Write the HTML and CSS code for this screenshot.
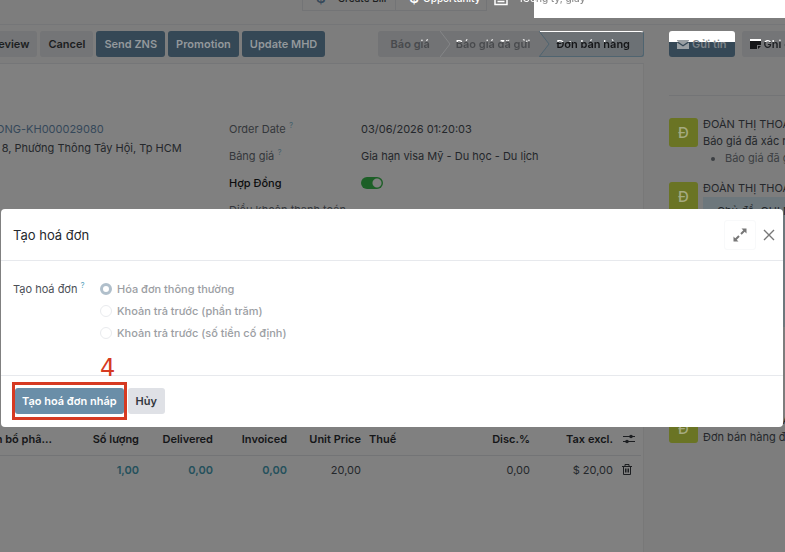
FILE: index.html
```html
<!DOCTYPE html>
<html lang="vi">
<head>
    <meta charset="UTF-8">
    <meta name="viewport" content="width=device-width, initial-scale=1.0">
    <title>Tạo hoá đơn</title>
    <link rel="stylesheet" href="styles.css">
</head>
<body>
    <div class="blank"></div>
    <div class="stat-bar">
        <button class="stat-button"><span class="stat-icon">$</span>Create Bill</button>
        <button class="stat-button bright"><span class="stat-icon">$</span>Opportunity</button>
        <button class="stat-button bright">
            <svg width="14" height="16" viewBox="0 0 14 16"><path d="M1 1h12v13.500H1zM3.500 8.500h7M3.500 11.500h7" fill="none" stroke="#fff" stroke-width="1.500"/></svg>
            <span class="faded">1Công ty, giấy</span>
        </button>
    </div>

    <div class="page">
        <main class="form">
            <div class="status-bar">
                <button class="btn btn-light first">Preview</button>
                <button class="btn btn-light">Cancel</button>
                <button class="btn btn-primary">Send ZNS</button>
                <button class="btn btn-primary">Promotion</button>
                <button class="btn btn-primary">Update MHD</button>
                <div class="steps">
                    <button class="step">Báo g<span class="lit">iá</span></button>
                    <svg class="arrow" width="11" height="26" viewBox="0 0 11 26"><path d="M0 0l10 13L0 26" fill="none" stroke="#858688"/></svg>
                    <button class="step"><span class="lit">Báo giá đã gửi</span></button>
                    <button class="step step-active">
                        <svg width="11" height="26" viewBox="0 0 11 26"><path d="M0 0l10 13L0 26z" fill="#727375"/><path d="M0 0l10 13L0 26" fill="none" stroke="#4f6470"/></svg>
                        <span class="lit">Đơn bán hàng</span>
                    </button>
                </div>
            </div>

            <div class="sheet">
                <div class="groups">
                    <div class="customer">
                        <a class="customer-name" href="#">DUONG-KH000029080</a>
                        <span>Số 8, Phường Thông Tây Hội, Tp HCM</span>
                    </div>
                    <dl class="fields">
                        <dt>Order Date <sup>?</sup></dt>
                        <dd>03/06/2026 01:20:03</dd>
                        <dt>Bảng giá <sup>?</sup></dt>
                        <dd>Gia hạn visa Mỹ - Du học - Du lịch</dd>
                        <dt><label class="strong" for="contract">Hợp Đồng</label></dt>
                        <dd><input class="switch" type="checkbox" id="contract" checked></dd>
                        <dt>Điều khoản thanh toán</dt>
                        <dd></dd>
                    </dl>
                </div>

                <table class="lines">
                    <colgroup>
                        <col class="col-first"><col class="col-num"><col class="col-num"><col class="col-num"><col class="col-num"><col><col class="col-num"><col class="col-total"><col class="col-icon">
                    </colgroup>
                    <thead>
                        <tr>
                            <th><span class="cut">Phân bổ phâ...</span></th>
                            <th>Số lượng</th>
                            <th>Delivered</th>
                            <th>Invoiced</th>
                            <th>Unit Price</th>
                            <th class="left">Thuế</th>
                            <th>Disc.%</th>
                            <th>Tax excl.</th>
                            <th class="icon"><svg width="12" height="10" viewBox="0 0 12 10"><path d="M0 2.500h12M0 7.500h12" stroke="#1c1e21"/><circle cx="8" cy="2.500" r="1.800" fill="#1c1e21"/><circle cx="4" cy="7.500" r="1.800" fill="#1c1e21"/></svg></th>
                        </tr>
                    </thead>
                    <tbody>
                        <tr>
                            <td></td>
                            <td class="teal">1,00</td>
                            <td class="teal">0,00</td>
                            <td class="teal">0,00</td>
                            <td>20,00</td>
                            <td></td>
                            <td>0,00</td>
                            <td>$ 20,00</td>
                            <td class="icon trash"><svg width="10" height="11" viewBox="0 0 10 11"><path d="M0 2.500h10M3 2.500V.5h4v2M1.500 2.500v8h7v-8M3.500 4.500v4M5 4.500v4M6.500 4.500v4" fill="none" stroke="#1c1e21"/></svg></td>
                        </tr>
                    </tbody>
                </table>
            </div>
        </main>

        <aside class="chatter">
            <div class="chatter-bar">
                <button class="btn btn-primary send">
                    <svg width="12" height="10" viewBox="0 0 12 10"><path d="M0 1h12v1L6 6 0 2zM0 3.500l6 4 6-4V10H0z" fill="#9aa0a4"/></svg>
                    Gửi tin
                </button>
                <button class="btn btn-light note">
                    <svg width="11" height="10" viewBox="0 0 11 10"><path d="M0 0h11v6H7v4H0zM8 7h3l-3 3z" fill="#151618"/><path d="M0 0h11v2H0z" fill="#fff"/></svg>
                    <span class="lit">Ghi chú</span>
                </button>
            </div>
            <div class="thread">
                <article class="message">
                    <div class="avatar">Đ</div>
                    <div class="message-body">
                        <div>ĐOÀN THỊ THOA</div>
                        <div>Báo giá đã xác nhận</div>
                        <ul><li>Báo giá đã gửi</li></ul>
                    </div>
                </article>
                <article class="message tall">
                    <div class="avatar">Đ</div>
                    <div class="message-body">
                        <div>ĐOÀN THỊ THOA</div>
                        <div class="bubble">Chủ đề: GHI NHẬN</div>
                    </div>
                </article>
                <article class="message">
                    <div class="avatar">Đ</div>
                    <div class="message-body">
                        <div>ĐOÀN THỊ THOA</div>
                        <div>Đơn bán hàng đã tạo</div>
                    </div>
                </article>
            </div>
        </aside>
    </div>

    <div class="dialog" role="dialog" aria-labelledby="dialog-title">
        <header class="dialog-header">
            <h1 id="dialog-title">Tạo hoá đơn</h1>
            <button class="expand" aria-label="Mở rộng"><svg width="14" height="14" viewBox="0 0 14 14"><path d="M8.500 0.500h5v5zM5.500 13.500h-5v-5z" fill="#777"/><path d="M12 2L8 6M6 8l-4 4" stroke="#777" stroke-width="2"/></svg></button>
            <button class="close" aria-label="Đóng"><svg width="12" height="12" viewBox="0 0 12 12"><path d="M1 1l10 10M11 1L1 11" stroke="#777" stroke-width="1.400"/></svg></button>
        </header>
        <div class="dialog-body">
            <div class="field-label">Tạo hoá đơn <sup>?</sup></div>
            <div class="options">
                <label><input type="radio" name="method" checked disabled>Hóa đơn thông thường</label>
                <label><input type="radio" name="method" disabled>Khoản trả trước (phần trăm)</label>
                <label><input type="radio" name="method" disabled>Khoản trả trước (số tiền cố định)</label>
            </div>
        </div>
        <footer class="dialog-footer">
            <div class="marked">
                <button class="btn btn-create">Tạo hoá đơn nháp</button>
                <span class="marker">4</span>
            </div>
            <button class="btn btn-cancel">Hủy</button>
        </footer>
    </div>
</body>
</html>
```
FILE: styles.css
```css
* {
    box-sizing: border-box;
}
body {
    margin: 0;
    min-height: 100vh;
    display: flex;
    flex-direction: column;
    overflow: hidden;
    position: relative;
    background-color: #7d7d7d;
    color: #24272b;
    font-family: Inter, "Noto Sans", sans-serif;
    font-size: 11px;
    line-height: 16px;
}
button {
    font: inherit;
    border: none;
    margin: 0;
    cursor: pointer;
}
a {
    color: inherit;
    text-decoration: none;
}
sup {
    font-size: 8px;
    line-height: 8px;
    color: #47606c;
}

/* stat buttons */
.stat-bar {
    position: relative;
    display: flex;
    align-items: flex-end;
    height: 25px;
    padding: 0 0 13px 302px;
    border-bottom: 1px solid #757678;
}
.stat-button {
    display: flex;
    flex-shrink: 0;
    align-items: center;
    gap: 12px;
    height: 26px;
    padding: 0 9px 0 13px;
    background: none;
    border: 1px solid #737476;
    border-top: none;
    border-left: none;
    color: #1c1e21;
    font-size: 10px;
    font-weight: 500;
    white-space: nowrap;
}
.stat-button:first-child {
    border-left: 1px solid #737476;
}
.stat-button.bright {
    gap: 4px;
    padding: 0 6px 0 13px;
    color: #fff;
}
.stat-button.bright:last-child {
    gap: 10px;
    padding-left: 7px;
    border: none;
}
.stat-icon {
    font-size: 15px;
    color: #35485a;
}
.bright .stat-icon {
    color: #fff;
}
.faded {
    background: linear-gradient(90deg, #fff 17px, #8a8a8a 17px);
    background-clip: text;
    -webkit-text-fill-color: transparent;
}
.blank {
    position: absolute;
    top: 0;
    right: 0;
    width: 251px;
    height: 18px;
    background-color: #fff;
}

/* form */
.page {
    flex: 1;
    display: flex;
}
.form {
    flex: 1;
    min-width: 0;
    display: flex;
    flex-direction: column;
}
.status-bar {
    display: flex;
    align-items: center;
    gap: 3px;
    height: 38px;
    white-space: nowrap;
}
.btn {
    height: 26px;
    padding: 0 8px;
    border-radius: 3px;
    font-weight: 600;
    white-space: nowrap;
}
.btn-light {
    background-color: #747577;
    color: #1c1e21;
}
.btn-primary {
    background-color: #354856;
    color: #93989c;
}
.first {
    margin-left: -21px;
}
.steps {
    display: flex;
    margin-left: auto;
    background-color: #727375;
    border-radius: 3px;
}
.step {
    height: 26px;
    padding: 0 0 0 13px;
    background: none;
    color: #484a4d;
    font-weight: 600;
}
.arrow {
    margin-left: 10px;
}
.arrow + .step {
    padding: 0 9px 0 5px;
}
.step-active {
    display: flex;
    align-items: center;
    gap: 6px;
    padding: 0 13px 0 0;
    background-color: #6c7175;
    border: 1px solid #4f6470;
    border-top-color: #fff;
    border-left: none;
    border-radius: 0 3px 3px 0;
    color: #151618;
}
.lit {
    display: inline-block;
    background: linear-gradient(#fff 6px, currentColor 6px);
    background-clip: text;
    -webkit-text-fill-color: transparent;
}

/* sheet */
.sheet {
    flex: 1;
    background-color: #808080;
    border-top: 1px solid #757678;
    border-right: 1px solid #787878;
}
.groups {
    display: flex;
    height: 360px;
    padding-top: 57px;
}
.customer {
    display: flex;
    flex-direction: column;
    align-items: flex-start;
    gap: 3px;
    width: 229px;
    margin-left: -15px;
    white-space: nowrap;
}
.customer-name {
    margin-left: -5px;
    color: #35485a;
}
.fields {
    flex: 1;
    display: grid;
    grid-template-columns: 132px 1fr;
    grid-auto-rows: 16px;
    row-gap: 11px;
    margin: 0 0 0 15px;
    white-space: nowrap;
}
.fields dt {
    color: #34373b;
}
.fields dd {
    margin: 0;
}
.strong {
    color: #0c0d0e;
    font-weight: 500;
}
.switch {
    appearance: none;
    display: block;
    width: 22px;
    height: 12px;
    margin: 2px 0 0;
    border-radius: 6px;
    background: radial-gradient(circle at 16px 6px, #808080 4px, #1d5f27 5px);
}

/* order lines */
.lines {
    width: 641px;
    max-width: 100%;
    table-layout: fixed;
    border-collapse: collapse;
}
.col-first {
    width: 69px;
}
.col-num {
    width: 74px;
}
.col-total {
    width: 83px;
}
.col-icon {
    width: 24px;
}
.lines th,
.lines td {
    height: 31px;
    padding: 0 4px;
    text-align: right;
    white-space: nowrap;
}
.lines td {
    height: 29px;
}
.lines th {
    color: #151618;
    font-weight: 600;
    border-bottom: 1px solid #737476;
}
.lines .left {
    text-align: left;
}
.lines .icon {
    text-align: center;
    line-height: 8px;
}
.lines .trash {
    padding-right: 9px;
}
.cut {
    float: right;
    margin-right: 13px;
}
.lines .teal {
    color: #24505c;
    font-weight: 600;
}

/* chatter */
.chatter {
    width: 141px;
    padding-left: 25px;
    overflow: hidden;
    white-space: nowrap;
}
.chatter-bar {
    display: flex;
    align-items: center;
    gap: 7px;
    height: 38px;
}
.send {
    background: linear-gradient(#fff 11px, #354856 11px);
    color: #7d8388;
}
.send,
.note {
    display: flex;
    flex-shrink: 0;
    align-items: center;
    gap: 3px;
}
.thread {
    margin-top: 32px;
    padding-top: 20px;
    border-top: 1px solid #737476;
}
.message {
    display: flex;
    gap: 5px;
    height: 64px;
}
.message.tall {
    height: 232px;
}
.avatar {
    flex-shrink: 0;
    width: 29px;
    height: 29px;
    margin-top: 2px;
    border-radius: 3px;
    background-color: #6a7424;
    color: #a5aa80;
    font-size: 15px;
    line-height: 29px;
    text-align: center;
    font-weight: 500;
}
.message-body {
    flex: 1;
    line-height: 17px;
}
.message-body ul {
    margin: 0;
    padding-left: 22px;
    color: #3c3f43;
}
.bubble {
    height: 130px;
    padding: 6px 14px;
    background-color: #6d777c;
}

/* dialog */
.dialog {
    position: absolute;
    top: 209px;
    left: 1px;
    right: 2px;
    border-radius: 4px;
    background-color: #fff;
    color: #374151;
}
.dialog-header {
    display: flex;
    align-items: center;
    height: 52px;
    padding: 0 8px 0 12px;
    border-bottom: 1px solid #e7e9ed;
}
.dialog-header h1 {
    flex: 1;
    margin: 0;
    color: #25282d;
    font-size: 13px;
    font-weight: 400;
}
.expand,
.close {
    display: flex;
    align-items: center;
    justify-content: center;
    height: 30px;
    padding: 0;
    background: none;
}
.expand {
    width: 32px;
    margin-right: 7px;
    border: 1px solid #f8f9fa;
    border-radius: 3px;
}
.dialog-body {
    display: flex;
    height: 114px;
    padding: 20px 12px;
}
.field-label {
    width: 87px;
    color: #4c5057;
}
.field-label sup {
    color: #5aa5bd;
}
.options {
    display: flex;
    flex-direction: column;
    gap: 6px;
}
.options label {
    display: flex;
    align-items: center;
    gap: 5px;
    color: #9b9ea3;
    font-weight: 500;
}
.options input {
    appearance: none;
    width: 12px;
    height: 12px;
    margin: 0;
    border: 1px solid #e9ebee;
    border-radius: 50%;
}
.options input:checked {
    border: 3px solid #b0bfcb;
}
.dialog-footer {
    display: flex;
    align-items: center;
    gap: 1px;
    height: 52px;
    padding: 0 11px 1px;
    border-top: 1px solid #e7e9ed;
}
.marked {
    position: relative;
    padding: 3px 0;
    border: 3px solid #d63a22;
}
.marker {
    position: absolute;
    top: -31px;
    left: 85px;
    color: #d63a22;
    font-family: "DejaVu Sans", sans-serif;
    font-size: 24px;
    line-height: 28px;
}
.btn-create {
    display: block;
    padding: 0 7px;
    background-color: #6a8ea8;
    color: #fff;
}
.btn-cancel {
    background-color: #dfe1e6;
    color: #33373d;
}
```
